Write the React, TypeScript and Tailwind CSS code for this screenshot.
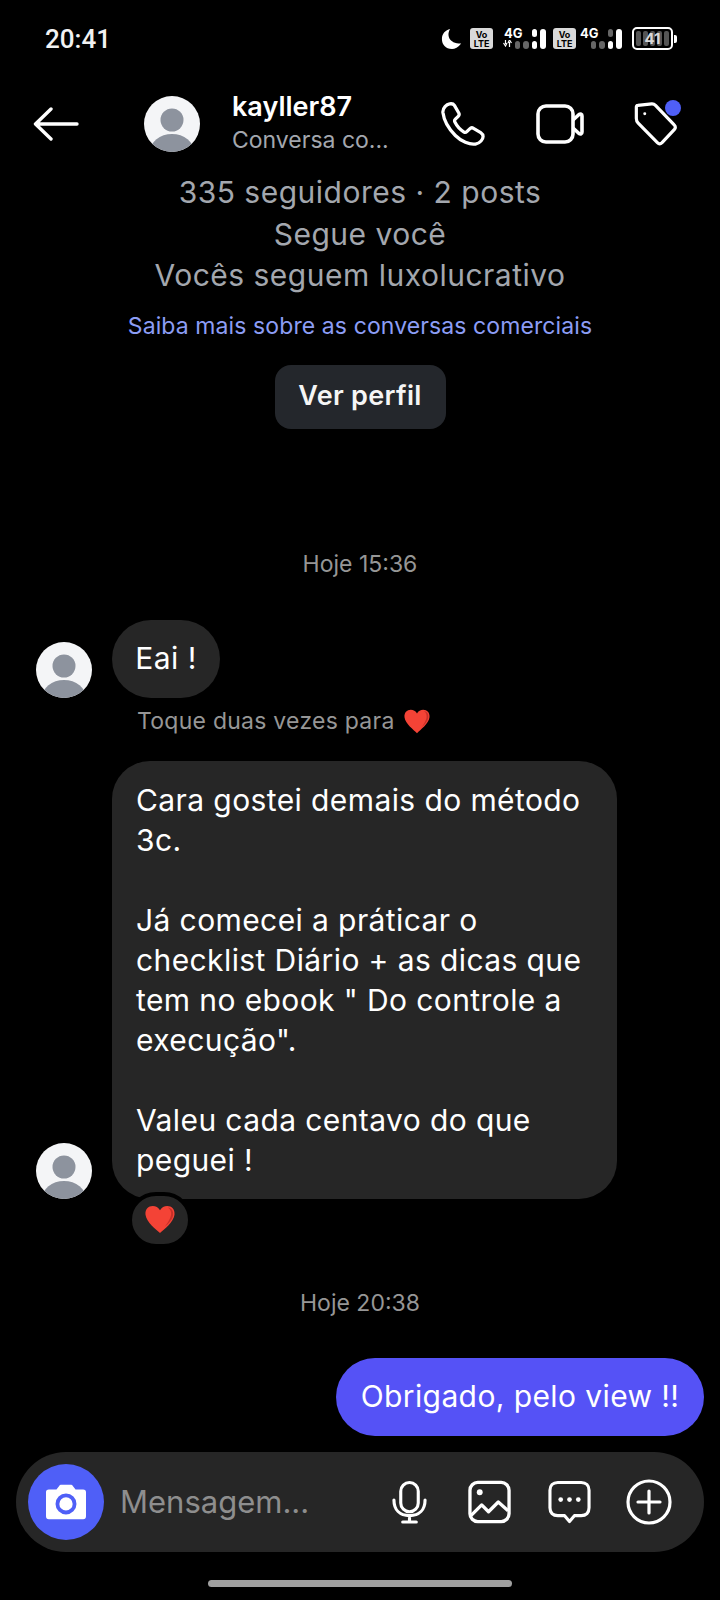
const FONT = "font-['Inter','Noto_Sans',sans-serif]";

function Avatar({ size }: { size: string }) {
  return (
    <svg viewBox="0 0 56 56" className={size}>
      <defs>
        <clipPath id="avatar-clip">
          <circle cx="28" cy="28" r="28" />
        </clipPath>
      </defs>
      <circle cx="28" cy="28" r="28" fill="#f4f5f7" />
      <g clipPath="url(#avatar-clip)" fill="#8d939e">
        <circle cx="28" cy="24" r="11.5" />
        <ellipse cx="28" cy="56" rx="22" ry="18" />
      </g>
    </svg>
  );
}

function Heart({ size }: { size: string }) {
  return (
    <svg viewBox="0 0 32 30" className={size}>
      <path
        d="M16 29 C12 25 2 18 1 10 C0.4 4.5 4 1 8.5 1 C11.5 1 14.5 2.5 16 5.5 C17.5 2.5 20.5 1 23.5 1 C28 1 31.6 4.5 31 10 C30 18 20 25 16 29 Z"
        fill="#f44336"
      />
      <path d="M24 2.5 C28 3 30 6 29.6 10 C29 15 25 19 21 22.5 C25 17 28 12 27.5 8 C27.2 5.5 26 3.6 24 2.5 Z" fill="#c62f28" />
    </svg>
  );
}

function SimCluster({ arrows, dim }: { arrows?: boolean; dim?: boolean }) {
  return (
    <div className="flex items-center gap-[2px]">
      <div className="flex h-[21px] w-[23px] flex-col items-center justify-center rounded-[3px] bg-[#d9d9d9] text-[9px] leading-[9px] font-bold text-black">
        <span>Vo</span>
        <span>LTE</span>
      </div>
      <div className={`relative h-[22px] ${arrows ? "w-[51px]" : "w-[44px]"}`}>
        <span className={`absolute top-[-2px] text-[13px] leading-[14px] font-bold text-white ${arrows ? "left-[9px]" : "left-[2px]"}`}>4G</span>
        {arrows && (
          <svg viewBox="0 0 9 7" className="absolute top-[12px] left-[8px] h-[7px] w-[9px]">
            <path d="M2.5 0 V4 M0.5 3 L2.5 6 L4 3 M6.5 7 V2 M5 3 L6.5 0 L8.5 3" fill="none" stroke="#fff" strokeWidth="1.2" />
          </svg>
        )}
        <div className="absolute right-0 bottom-[1px] flex items-end gap-[3px]">
          <span className="h-[8px] w-[5px] rounded-full bg-[#666]" />
          <span className="h-[8px] w-[6px] rounded-full bg-[#666]" />
          <div className="flex flex-col gap-[4px]">
            <span className={`h-[8px] w-[5px] rounded-full ${dim ? "bg-[#666]" : "bg-white"}`} />
            <span className="h-[8px] w-[5px] rounded-full bg-white" />
          </div>
          <span className="h-[20px] w-[6px] rounded-full bg-white" />
        </div>
      </div>
    </div>
  );
}

function StatusBar() {
  return (
    <div className="flex h-[87px] items-start justify-between pt-[25px] pr-[43px] pl-[45px]">
      <span className="font-['Roboto',sans-serif] text-[26px] leading-[28px] font-medium text-[#f2f2f2]">20:41</span>
      <div className="mt-[2px] flex items-center gap-[7px]">
        <svg viewBox="0 0 24 24" className="h-[22px] w-[22px]">
          <path d="M10 1 C6 7 8 17 22 17 C19 21 15 23 12 23 C5 23 1 18 1 12 C1 6 5 2 10 1 Z" fill="#fff" />
        </svg>
        <SimCluster arrows />
        <SimCluster dim />
        <div className="ml-[3px] flex items-center">
          <div className="relative flex h-[23px] w-[41px] items-center justify-center gap-[2px] rounded-[5px] border-2 border-white px-[2px]">
            <span className="h-[15px] w-[5px] rounded-[2px] bg-[#555]" />
            <span className="h-[15px] w-[5px] rounded-[2px] bg-[#555]" />
            <span className="h-[15px] w-[5px] rounded-[2px] bg-[#555]" />
            <span className="h-[15px] w-[5px] rounded-[2px] bg-[#555]" />
            <span className="h-[15px] w-[5px] rounded-[2px] bg-[#555]" />
            <span className="absolute inset-0 text-center text-[15px] leading-[19px] font-bold text-[#d8d8d8]">41</span>
          </div>
          <span className="ml-[1px] h-[8px] w-[3px] rounded-r-[2px] bg-white" />
        </div>
      </div>
    </div>
  );
}

function Header() {
  return (
    <div className="flex h-[74px] items-center pr-[43px] pl-[33px]">
      <svg viewBox="0 0 46 34" fill="none" stroke="#fff" strokeWidth="3.4" strokeLinecap="round" strokeLinejoin="round" className="h-[34px] w-[46px]">
        <path d="M44 17 H3 M18 2 L2.5 17 L18 32" />
      </svg>
      <div className="ml-[65px] shrink-0">
        <Avatar size="h-[56px] w-[56px]" />
      </div>
      <div className="ml-[32px] flex w-[180px] flex-col">
        <span className="text-[27px] leading-[32px] font-semibold text-white">kayller87</span>
        <span className="mt-[1px] text-[23px] leading-[33px] text-[#a3a7ae]">Conversa co...</span>
      </div>
      <div className="ml-auto flex items-center">
        <svg viewBox="0 0 46 46" fill="none" stroke="#fff" strokeWidth="3.4" strokeLinejoin="round" className="h-[44px] w-[44px]">
          <path d="M9 2 C6 2.5 1.5 6 2 11 C3 19 8 28 15 35 C21 41 30 45 36 44 C41 43 44 39 44 36 C44 34 43 33 41.5 32 L34 27.5 C32.5 26.6 31 27 30 28 L27 31 C26 32 25 32 24 31.5 C20 29 16 24 14.5 21 C14 20 14 19 15 18 L18 15 C19 14 19.3 12.8 18.6 11.5 L14 3.5 C13 2 11 1.6 9 2 Z" />
        </svg>
        <svg viewBox="0 0 48 40" fill="none" stroke="#fff" strokeWidth="3.6" strokeLinejoin="round" className="ml-[51px] h-[40px] w-[48px]">
          <rect x="2" y="2" width="35" height="36" rx="8" />
          <path d="M37 16 L43 10.5 C44.5 9.5 46 10 46 12 V28 C46 30 44.5 30.5 43 29.5 L37 24" />
        </svg>
        <div className="relative ml-[50px] h-[44px] w-[43px]">
          <svg viewBox="0 0 46 46" fill="none" stroke="#fff" strokeWidth="3.4" strokeLinejoin="round" className="h-[44px] w-[43px]">
            <path d="M4 3 L19 1.5 C21 1.4 22 2 23 3 L43 24 C44.5 25.5 44.5 27 43.5 28.5 L30 43 C28.5 44.5 26.5 44.5 25 43 L4.5 22 C3 20.5 2.5 19 2.5 17 V5 C2.5 4 3 3 4 3 Z" />
            <circle cx="11.5" cy="12" r="1.6" fill="#fff" stroke="none" />
          </svg>
          <span className="absolute top-[-2px] right-[-4px] h-[16px] w-[16px] rounded-full bg-[#4f5ff7]" />
        </div>
      </div>
    </div>
  );
}

function ProfileInfo() {
  return (
    <div className="flex flex-col items-center">
      <div className="flex flex-col items-center pt-[11px] text-[30px] leading-[41.5px] tracking-[0.5px] text-[#a3a7ae]">
        <span>335 seguidores · 2 posts</span>
        <span>Segue você</span>
        <span>Vocês seguem luxolucrativo</span>
      </div>
      <span className="mt-[14px] text-[23px] leading-[30px] tracking-[0.1px] text-[#8c9df5]">Saiba mais sobre as conversas comerciais</span>
      <button className="mt-[24px] h-[64px] w-[171px] rounded-[16px] bg-[#24272c] text-[27px] font-semibold tracking-[0.3px] text-[#f5f5f5]">
        Ver perfil
      </button>
    </div>
  );
}

function Stamp({ children, className }: { children: string; className: string }) {
  return <div className={`text-center text-[23px] leading-[30px] text-[#969696] ${className}`}>{children}</div>;
}

function Incoming() {
  return (
    <>
      <div className="mt-[41px] flex items-end pl-[36px]">
        <Avatar size="h-[56px] w-[56px]" />
        <div className="ml-[20px] flex h-[78px] w-[108px] items-center justify-center rounded-[39px] bg-[#262626] text-[30px] tracking-[0.5px] text-white">
          Eai !
        </div>
      </div>
      <div className="mt-[9px] ml-[137px] flex h-[30px] items-center gap-[8px] text-[23px] tracking-[0.25px] text-[#969696]">
        <span>Toque duas vezes para</span>
        <Heart size="h-[25px] w-[28px]" />
      </div>
      <div className="mt-[24px] flex items-end pl-[36px]">
        <Avatar size="h-[56px] w-[56px]" />
        <div className="relative ml-[20px] w-[505px] rounded-[38px] bg-[#262626] px-[24px] py-[19px] text-[30px] leading-[40px] tracking-[0.4px] text-white">
          <p>
            Cara gostei demais do método
            <br />
            3c.
          </p>
          <p className="mt-[40px]">
            Já comecei a práticar o
            <br />
            checklist Diário + as dicas que
            <br />
            tem no ebook " Do controle a
            <br />
            execução".
          </p>
          <p className="mt-[40px]">
            Valeu cada centavo do que
            <br />
            peguei !
          </p>
          <div className="absolute bottom-[-49px] left-[16px] flex h-[56px] w-[64px] items-center justify-center rounded-full border-4 border-black bg-[#262626]">
            <Heart size="h-[29px] w-[32px]" />
          </div>
        </div>
      </div>
    </>
  );
}

function Composer() {
  return (
    <div className="mx-[16px] mt-[16px] flex h-[100px] items-center rounded-[50px] bg-[#262626] pr-[32px] pl-[12px]">
      <div className="flex h-[76px] w-[76px] items-center justify-center rounded-full bg-[#4f5ff7]">
        <svg viewBox="0 0 42 36" className="h-[36px] w-[40px]">
          <path d="M3 5 H11 L14 1 C14.5 0.4 15 0 16 0 H26 C27 0 27.5 0.4 28 1 L31 5 H39 C41 5 42 6 42 8 V33 C42 35 41 36 39 36 H3 C1 36 0 35 0 33 V8 C0 6 1 5 3 5 Z" fill="#fff" />
          <circle cx="21" cy="20" r="9" fill="none" stroke="#4f5ff7" strokeWidth="4" />
        </svg>
      </div>
      <span className="ml-[16px] text-[31px] leading-[36px] text-[#8e8e8e]">Mensagem...</span>
      <div className="ml-auto flex items-center">
        <svg viewBox="0 0 36 44" fill="none" stroke="#fff" strokeWidth="3.2" strokeLinecap="round" className="h-[44px] w-[35px]">
          <rect x="9" y="2" width="18" height="30" rx="9" />
          <path d="M2 20 C2 30 8 36 18 36 C28 36 34 30 34 20 M18 36 V42 M11 42.5 H25" />
        </svg>
        <svg viewBox="0 0 44 44" fill="none" stroke="#fff" strokeWidth="3.4" strokeLinejoin="round" className="ml-[41px] h-[44px] w-[43px]">
          <rect x="2" y="2" width="40" height="40" rx="8" />
          <circle cx="12" cy="12" r="3" fill="#fff" stroke="none" />
          <path d="M3 36 L14 25 L21 32 L31 22 L41 31" />
        </svg>
        <svg viewBox="0 0 44 44" fill="none" stroke="#fff" strokeWidth="3.2" strokeLinejoin="round" className="ml-[37px] h-[44px] w-[43px]">
          <path d="M10 2 H34 C39 2 42 5 42 10 V28 C42 33 39 36 34 36 H27 L22 42 L17 36 H10 C5 36 2 33 2 28 V10 C2 5 5 2 10 2 Z" />
          <circle cx="13" cy="19.5" r="2.4" fill="#fff" stroke="none" />
          <circle cx="22" cy="19.5" r="2.4" fill="#fff" stroke="none" />
          <circle cx="31" cy="19.5" r="2.4" fill="#fff" stroke="none" />
        </svg>
        <svg viewBox="0 0 46 46" fill="none" stroke="#fff" strokeWidth="3.2" strokeLinecap="round" className="ml-[35px] h-[46px] w-[46px]">
          <circle cx="23" cy="23" r="21" />
          <path d="M23 12 V34 M12 23 H34" />
        </svg>
      </div>
    </div>
  );
}

export default function App() {
  return (
    <div className={`flex h-[1600px] w-[720px] flex-col overflow-hidden bg-black ${FONT}`}>
      <StatusBar />
      <Header />
      <ProfileInfo />
      <Stamp className="mt-[120px]">Hoje 15:36</Stamp>
      <Incoming />
      <Stamp className="mt-[89px]">Hoje 20:38</Stamp>
      <div className="mt-[40px] flex justify-end pr-[16px]">
        <div className="flex h-[78px] w-[368px] items-center justify-center rounded-[39px] bg-[#5552f6] text-[30px] tracking-[0.4px] text-white">
          Obrigado, pelo view !!
        </div>
      </div>
      <Composer />
      <div className="mx-auto mt-[28px] h-[7px] w-[304px] rounded-full bg-[#a0a0a0]" />
    </div>
  );
}
